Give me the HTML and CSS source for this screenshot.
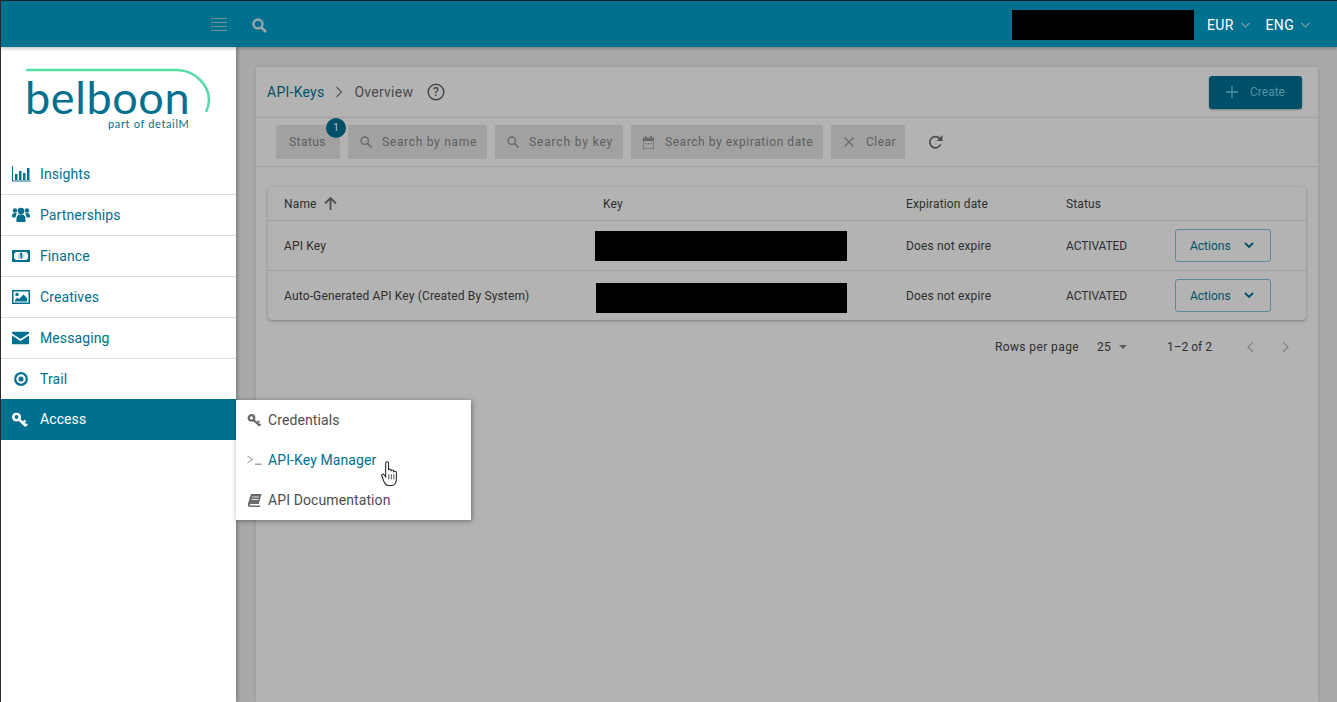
FILE: index.html
```html
<!DOCTYPE html>
<html lang="en">

<head>
    <meta charset="UTF-8">
    <meta name="viewport" content="width=device-width, initial-scale=1.0">
    <title>API-Keys Overview</title>
    <link rel="stylesheet" href="styles.css">
</head>

<body>
    <header class="topbar">
        <div class="topbar-left">
            <svg class="menu-icon" width="16" height="13" viewBox="0 0 16 13"><path d="M0 .5h16M0 4.500h16M0 8.500h16M0 12.500h16" stroke="#6f8f99" fill="none"/></svg>
            <svg class="top-search" width="15" height="15" viewBox="0 0 15 15"><circle cx="6" cy="6" r="4.500" fill="none" stroke="#9aa5a8" stroke-width="2.400"/><path d="M9.500 9.500l4.500 4.500" stroke="#9aa5a8" stroke-width="2.600"/></svg>
        </div>
        <div class="topbar-right">
            <div class="redact redact-user"></div>
            <span class="top-select">EUR <svg width="9" height="6" viewBox="0 0 9 6"><path d="M.5 1l4 4 4-4" fill="none" stroke="#7f9aa3" stroke-width="1.200"/></svg></span>
            <span class="top-select">ENG <svg width="9" height="6" viewBox="0 0 9 6"><path d="M.5 1l4 4 4-4" fill="none" stroke="#7f9aa3" stroke-width="1.200"/></svg></span>
        </div>
    </header>

    <div class="layout">
        <aside class="sidebar">
            <div class="logo">
                <svg class="logo-arc" width="188" height="46" viewBox="0 0 188 46"><path d="M0 2h150c20 0 33 16 33 30 0 4-1 8-3 12" fill="none" stroke="#56dba6" stroke-width="2.500"/></svg>
                <div class="logo-name">belboon</div>
                <div class="logo-sub">part of detailM</div>
            </div>
            <nav class="nav">
                <a class="nav-item">
                    <svg width="19" height="16" viewBox="0 0 19 16"><path d="M.5 0v15h18" fill="none" stroke="currentColor"/><path d="M3 8h2.500v6H3zM7 5h2.500v9H7zM11 7h2.500v7H11zM15 2h2.500v12H15z" fill="currentColor"/></svg>
                    Insights
                </a>
                <a class="nav-item">
                    <svg width="18" height="16" viewBox="0 0 18 16"><circle cx="3" cy="3.500" r="2.200" fill="currentColor"/><circle cx="15" cy="3.500" r="2.200" fill="currentColor"/><circle cx="9" cy="4" r="3.300" fill="currentColor"/><path d="M0 10c0-3 1-4 3-4l2 .5C4 8 3.500 9 3.500 10.500H1zM18 10c0-3-1-4-3-4l-2 .5c1 1.500 1.500 2.500 1.500 4H17zM4.500 15v-3c0-3 1.500-4.500 3-4.500h3c1.500 0 3 1.500 3 4.500v3z" fill="currentColor"/></svg>
                    Partnerships
                </a>
                <a class="nav-item">
                    <svg width="18" height="12" viewBox="0 0 18 12"><path fill-rule="evenodd" d="M0 0h18v12H0zM3.500 2C3.500 3 3 3.500 2 3.500v5c1 0 1.500.5 1.500 1.500h11c0-1 .5-1.500 1.500-1.500v-5c-1 0-1.500-.5-1.500-1.500z" fill="currentColor"/><path d="M8 4l1.300-.8V8.500" fill="none" stroke="currentColor" stroke-width="1.400"/><circle cx="9" cy="6" r="3" fill="currentColor" opacity=".3"/></svg>
                    Finance
                </a>
                <a class="nav-item">
                    <svg width="18" height="14" viewBox="0 0 18 14"><path fill-rule="evenodd" d="M0 0h18v14H0zM1.500 1.500v11h15v-11z" fill="currentColor"/><circle cx="5" cy="4.500" r="1.700" fill="currentColor"/><path d="M3 11.500V10l2.500-2.500L7 9l4.500-4.500L15 8v3.500z" fill="currentColor"/></svg>
                    Creatives
                </a>
                <a class="nav-item">
                    <svg width="17" height="13" viewBox="0 0 17 13"><path d="M1 0h15c.600 0 1 .400 1 1v1L8.500 7.500 0 2V1c0-.600.400-1 1-1zM0 4l8.500 5.500L17 4v8c0 .600-.400 1-1 1H1c-.600 0-1-.400-1-1z" fill="currentColor"/></svg>
                    Messaging
                </a>
                <a class="nav-item">
                    <svg width="18" height="14" viewBox="0 0 14 14"><circle cx="7" cy="7" r="5.800" fill="none" stroke="currentColor" stroke-width="2.200"/><circle cx="7" cy="7" r="2.500" fill="currentColor"/></svg>
                    Trail
                </a>
                <a class="nav-item nav-item-active">
                    <svg width="16" height="15" viewBox="0 0 16 15"><circle cx="4.500" cy="4.500" r="3.200" fill="none" stroke="currentColor" stroke-width="2.600"/><path d="M7 7l7 6.500M11 10.500l2.500-2.500M13.500 13l1.500-1.500" fill="none" stroke="currentColor" stroke-width="2.400"/></svg>
                    Access
                </a>
            </nav>
            <div class="submenu">
                <a class="submenu-item">
                    <svg width="15" height="13" viewBox="0 0 16 15"><circle cx="4.500" cy="4.500" r="3.200" fill="none" stroke="#6a6a6a" stroke-width="2.600"/><path d="M7 7l7 6.500M11 10.500l2.500-2.500M13.500 13l1.500-1.500" fill="none" stroke="#6a6a6a" stroke-width="2.400"/></svg>
                    Credentials
                </a>
                <a class="submenu-item submenu-item-hover">
                    <svg width="15" height="10" viewBox="0 0 15 10"><path d="M.5 1l5 3.500-5 3.500" fill="none" stroke="#b0b0b0" stroke-width="1.100"/><path d="M8 9.200h6.500" fill="none" stroke="#8c8c8c" stroke-width="1.200"/></svg>
                    API-Key Manager
                </a>
                <a class="submenu-item">
                    <svg width="14" height="13" viewBox="0 0 14 13"><path d="M3.500 0H14l-2.800 10H3C2 10 1.800 11.500 3 11.500h10l-.5 1.500H2.500C.5 13 0 11.500.5 9.500z" fill="#6a6a6a"/><path d="M4.500 3h7M4 5.500h7" stroke="#fff" stroke-width=".8"/></svg>
                    API Documentation
                </a>
            </div>
            <svg class="hand-cursor" width="17" height="25" viewBox="0 0 16.500 24.500"><path d="M4.500 2c0-1.800 2.800-1.800 2.800 0v7c0-1.500 2.500-1.500 2.500 0v1c0-1.500 2.500-1.500 2.500 0v1c0-1.400 2.700-1.400 2.700.3V18c0 3-2 6-4 6H7c-2 0-3-1.500-4-3.500L.8 15c-.8-2 1.300-2.800 2.200-1.500l1.500 2z" fill="#fff" stroke="#222" stroke-width="1"/><path d="M7.500 13v5M10 13v5M12.500 13v5" stroke="#222" stroke-width=".8"/></svg>
        </aside>

        <main class="content">
            <section class="panel">
                <div class="panel-head">
                    <div class="crumbs">
                        <span class="crumb-link">API-Keys</span>
                        <svg width="9" height="12" viewBox="0 0 9 12"><path d="M1.500 1l5 5-5 5" fill="none" stroke="#555" stroke-width="1.200"/></svg>
                        <span class="crumb-current">Overview</span>
                        <svg class="help-icon" width="18" height="18" viewBox="0 0 18 18"><circle cx="9" cy="9" r="7.800" fill="none" stroke="#484848" stroke-width="1.500"/><text x="9" y="13" text-anchor="middle" class="help-mark">?</text></svg>
                    </div>
                    <button class="btn-create">
                        <svg width="12" height="12" viewBox="0 0 12 12"><path d="M6 0v12M0 6h12" stroke="#4f93a5" stroke-width="1.300"/></svg>
                        Create
                    </button>
                </div>

                <div class="filters">
                    <div class="chip chip-status">Status<span class="badge">1</span></div>
                    <div class="chip chip-name">
                        <svg width="12" height="12" viewBox="0 0 12 12"><circle cx="4.700" cy="4.700" r="3.700" fill="none" stroke="#666" stroke-width="1.300"/><path d="M7.500 7.500l4 4" stroke="#666" stroke-width="1.500"/></svg>
                        Search by name
                    </div>
                    <div class="chip chip-key">
                        <svg width="12" height="12" viewBox="0 0 12 12"><circle cx="4.700" cy="4.700" r="3.700" fill="none" stroke="#666" stroke-width="1.300"/><path d="M7.500 7.500l4 4" stroke="#666" stroke-width="1.500"/></svg>
                        Search by key
                    </div>
                    <div class="chip chip-date">
                        <svg width="11" height="13" viewBox="0 0 11 13"><path d="M1 2h9c.500 0 1 .500 1 1v9c0 .500-.500 1-1 1H1c-.500 0-1-.500-1-1V3c0-.500.500-1 1-1z" fill="none" stroke="#666" stroke-width="1.200"/><path d="M0 2.500h11v2.500H0zM2 0h1.500v2H2zM7.500 0H9v2H7.500zM2.500 7h1.200v1.200H2.500zM5 7h1.200v1.200H5zM7.500 7h1.200v1.200H7.500z" fill="#666"/></svg>
                        Search by expiration date
                    </div>
                    <div class="chip chip-clear">
                        <svg width="10" height="10" viewBox="0 0 10 10"><path d="M.5.500l9 9M9.500.500l-9 9" stroke="#666" stroke-width="1.100"/></svg>
                        Clear
                    </div>
                    <svg class="refresh" width="15" height="15" viewBox="0 0 15 15"><path d="M12.500 9.500A5.600 5.600 0 1 1 12 4" fill="none" stroke="#4c4c4c" stroke-width="1.700"/><path d="M14.500 0v6h-6z" fill="#4c4c4c"/></svg>
                </div>

                <div class="table-wrap">
                    <div class="table">
                        <div class="row row-head">
                            <div class="cell cell-name">Name
                                <svg width="13" height="13" viewBox="0 0 13 13"><path d="M6.500 13V1.500M1 6.500l5.500-5.500L12 6.500" fill="none" stroke="#505050" stroke-width="1.800"/></svg>
                            </div>
                            <div class="cell cell-key-head">Key</div>
                            <div class="cell">Expiration date</div>
                            <div class="cell">Status</div>
                            <div class="cell"></div>
                        </div>
                        <div class="row">
                            <div class="cell cell-name">API Key</div>
                            <div class="cell"><div class="redact redact-key"></div></div>
                            <div class="cell">Does not expire</div>
                            <div class="cell cell-status">ACTIVATED</div>
                            <div class="cell"><button class="btn-actions">Actions
                                <svg width="10" height="7" viewBox="0 0 10 7"><path d="M1 1l4 4 4-4" fill="none" stroke="#005268" stroke-width="1.800"/></svg></button></div>
                        </div>
                        <div class="row">
                            <div class="cell cell-name">Auto-Generated API Key (Created By System)</div>
                            <div class="cell"><div class="redact redact-key redact-key-low"></div></div>
                            <div class="cell">Does not expire</div>
                            <div class="cell cell-status">ACTIVATED</div>
                            <div class="cell"><button class="btn-actions">Actions
                                <svg width="10" height="7" viewBox="0 0 10 7"><path d="M1 1l4 4 4-4" fill="none" stroke="#005268" stroke-width="1.800"/></svg></button></div>
                        </div>
                    </div>

                    <div class="pager">
                        <span>Rows per page</span>
                        <span class="pager-size">25 <i class="caret"></i></span>
                        <span class="pager-range">1–2 of 2</span>
                        <svg class="pager-prev" width="8" height="12" viewBox="0 0 8 12"><path d="M7 1L2 6l5 5" fill="none" stroke="#8a8a8a" stroke-width="1.500"/></svg>
                        <svg class="pager-next" width="8" height="12" viewBox="0 0 8 12"><path d="M1 1l5 5-5 5" fill="none" stroke="#8a8a8a" stroke-width="1.500"/></svg>
                    </div>
                </div>
            </section>
        </main>
    </div>
</body>

</html>
```

FILE: styles.css
```css
* {
    box-sizing: border-box;
}

html,
body {
    height: 100%;
    margin: 0;
    overflow: hidden;
}

body {
    display: flex;
    flex-direction: column;
    font-family: Roboto, "Liberation Sans", sans-serif;
    font-size: 12px;
    color: #2e2e2e;
    background-color: #a9a9a9;
    border-left: 1px solid #2b2b2b;
}

.topbar {
    height: 47px;
    flex: none;
    display: flex;
    align-items: center;
    justify-content: space-between;
    padding-top: 2px;
    background-color: #00708f;
    border-top: 1px solid #14262c;
    box-shadow: 0 1px 4px rgba(0, 0, 0, 0.3);
    position: relative;
    z-index: 3;
}

.topbar-left {
    display: flex;
    align-items: center;
    padding-left: 210px;
    gap: 25px;
}

.menu-icon {
    margin-top: -2px;
}

.top-search {
    margin-top: 1px;
}

.topbar-right {
    display: flex;
    align-items: center;
    padding-right: 27px;
}

.redact {
    background-color: #000;
}

.redact-user {
    width: 182px;
    height: 30px;
    margin-right: 13px;
}

.top-select {
    color: #fff;
    font-size: 14px;
    letter-spacing: 0.3px;
    margin-right: 16px;
    display: flex;
    align-items: center;
    gap: 7px;
}

.top-select:last-child {
    margin-right: 0;
}

.layout {
    flex: 1;
    display: flex;
    min-height: 0;
}

.sidebar {
    width: 235px;
    flex: none;
    background-color: #fff;
    position: relative;
    z-index: 2;
    box-shadow: 1px 0 4px rgba(0, 0, 0, 0.35);
}

.logo {
    height: 107px;
    position: relative;
    padding: 28px 0 0 24px;
}

.logo-arc {
    position: absolute;
    left: 25px;
    top: 21px;
}

.logo-name {
    font-family: Lato, sans-serif;
    font-weight: 400;
    font-size: 45px;
    line-height: 44px;
    letter-spacing: 0.6px;
    color: #00708f;
}

.logo-sub {
    font-family: Lato, sans-serif;
    font-size: 11px;
    letter-spacing: 0.65px;
    line-height: 10px;
    color: #00708f;
    margin-left: 83px;
}

.nav-item {
    height: 41px;
    display: flex;
    align-items: center;
    padding-left: 39px;
    position: relative;
    font-size: 14px;
    letter-spacing: 0.1px;
    color: #00708f;
    border-bottom: 1px solid #dcdcdc;
}

.nav-item svg {
    position: absolute;
    left: 11px;
    top: 50%;
    transform: translateY(-50%);
}

.nav-item-active {
    margin-top: -1px;
    padding-bottom: 2px;
    background-color: #00708f;
    color: #fff;
    border-bottom: none;
}

.submenu {
    position: absolute;
    left: 235px;
    top: 353px;
    width: 235px;
    height: 120px;
    background-color: #fff;
    box-shadow: 1px 1px 5px rgba(0, 0, 0, 0.4);
}

.submenu-item {
    height: 40px;
    display: flex;
    align-items: center;
    gap: 6px;
    padding-left: 11px;
    font-size: 14px;
    letter-spacing: 0.1px;
    color: #4d4d4d;
}

.submenu-item svg {
    flex: none;
    width: 15px;
}

.submenu-item-hover {
    color: #00708f;
}

.hand-cursor {
    position: absolute;
    left: 380px;
    top: 414px;
}

.content {
    flex: 1;
    min-width: 0;
    padding: 20px 19px 0 20px;
}

.panel {
    height: 100%;
    background-color: #b3b3b3;
    box-shadow: 0 0 3px rgba(0, 0, 0, 0.15);
}

.panel-head {
    height: 51px;
    display: flex;
    align-items: center;
    justify-content: space-between;
    padding: 0 16px 0 11px;
    border-bottom: 1px solid #a0a0a0;
}

.crumbs {
    display: flex;
    align-items: center;
    font-size: 14px;
    letter-spacing: 0.25px;
}

.crumb-link {
    color: #005268;
}

.crumbs svg {
    margin-left: 11px;
}

.crumb-current {
    color: #4a4a4a;
    margin-left: 10px;
}

.crumbs .help-icon {
    margin-left: 14px;
}

.help-mark {
    font-size: 12px;
    font-weight: 500;
    fill: #484848;
}

.btn-create {
    width: 93px;
    height: 33px;
    display: flex;
    align-items: center;
    gap: 12px;
    padding: 0 0 0 17px;
    border: none;
    border-radius: 3px;
    background-color: #004f68;
    color: #4f93a5;
    font-family: inherit;
    font-size: 12px;
    box-shadow: 0 1px 2px rgba(0, 0, 0, 0.3);
}

.filters {
    height: 49px;
    display: flex;
    align-items: center;
    gap: 8px;
    padding-left: 20px;
    border-bottom: 1px solid #a0a0a0;
}

.chip {
    height: 34px;
    flex: none;
    display: flex;
    align-items: center;
    gap: 10px;
    padding: 0 0 0 12px;
    border-radius: 2px;
    background-color: #a1a1a1;
    color: #5e5e5e;
    letter-spacing: 0.7px;
    white-space: nowrap;
    position: relative;
}

.chip-status {
    width: 64px;
    padding-left: 13px;
    letter-spacing: 0.45px;
}

.chip-name {
    width: 139px;
}

.chip-key {
    width: 128px;
    letter-spacing: 0.85px;
}

.chip-date {
    width: 192px;
    gap: 11px;
    letter-spacing: 0.55px;
}

.chip-clear {
    width: 74px;
    padding-left: 13px;
    gap: 12px;
    letter-spacing: 0.5px;
}

.badge {
    position: absolute;
    right: -6px;
    top: -7px;
    width: 20px;
    height: 20px;
    border-radius: 50%;
    background-color: #004f68;
    color: #b3c8ce;
    font-size: 10px;
    line-height: 20px;
    text-align: center;
    letter-spacing: 0;
}

.refresh {
    margin-left: 15px;
}

.table-wrap {
    padding: 20px 12px 0;
}

.table {
    border-radius: 4px;
    background-color: #b3b3b3;
    box-shadow: 0 1px 3px rgba(0, 0, 0, 0.3);
}

.row {
    height: 50px;
    display: grid;
    grid-template-columns: 327px 311px 160px 109px 1fr;
    align-items: center;
    border-bottom: 1px solid #a0a0a0;
    letter-spacing: 0.15px;
}

.row:last-child {
    border-bottom: none;
    height: 49px;
}

.row-head {
    height: 34px;
}

.cell-name {
    padding-left: 16px;
    display: flex;
    align-items: center;
    gap: 7px;
}

.cell-status {
    letter-spacing: -0.1px;
}

.cell-key-head {
    padding-left: 8px;
}

.redact-key {
    width: 252px;
    height: 30px;
}

.redact-key-low {
    margin: 5px 0 0 1px;
    width: 251px;
}

.btn-actions {
    width: 96px;
    height: 33px;
    display: flex;
    align-items: center;
    justify-content: space-between;
    padding: 0 16px 0 14px;
    border: 1px solid #5a8a99;
    border-radius: 3px;
    background: transparent;
    color: #005268;
    font-family: inherit;
    font-size: 12px;
}

.pager {
    height: 54px;
    display: flex;
    align-items: center;
    justify-content: flex-end;
    padding-right: 16px;
    letter-spacing: 0.4px;
}

.pager-size {
    margin-left: 18px;
    display: flex;
    align-items: center;
    gap: 8px;
    letter-spacing: 0.2px;
}

.caret {
    width: 0;
    height: 0;
    border-left: 4.5px solid transparent;
    border-right: 4.5px solid transparent;
    border-top: 4px solid #5c5c5c;
}

.pager-range {
    margin-left: 40px;
    letter-spacing: 0;
}

.pager-prev {
    margin-left: 34px;
}

.pager-next {
    margin-left: 28px;
}
```
